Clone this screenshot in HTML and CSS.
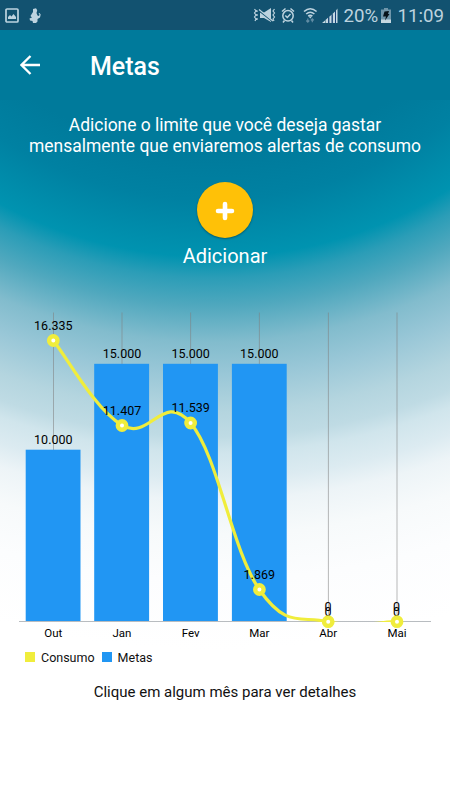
FILE: index.html
```html
<!DOCTYPE html>
<html lang="pt-BR">
<head>
  <meta charset="UTF-8">
  <meta name="viewport" content="width=device-width, initial-scale=1.0">
  <title>Metas</title>
  <link rel="stylesheet" href="styles.css">
</head>
<body>
  <div class="status-bar">
    <div class="status-left">
      <svg width="14" height="15" viewBox="0 0 14 15">
        <rect x="1" y="1" width="12" height="13" rx="1" fill="none" stroke="#bdd3df" stroke-width="1.7"/>
        <path d="M3 11V9l2-2 1.500 1.500L8.500 6 11 9v2z" fill="#bdd3df"/>
      </svg>
      <svg class="icon-figure" width="12" height="15" viewBox="0 0 12 15">
        <path d="M4 1l3-.7 1.200 2L7.500 5l1 2.500L10 8l.5-1.500L9.500 5.500l1-.5 1.200 1.500L11 9.500 8.500 11v2.500L7 15H4l-.5-2L1 12.500.5 10.500 3 9.500 1.500 8 3 5.500 4 4z" fill="#bdd3df"/>
      </svg>
    </div>
    <div class="status-right">
      <svg width="86" height="18" viewBox="253 6 86 18">
        <g fill="none" stroke="#bdd3df" stroke-width="1.200">
          <path d="M254.500 9l1.500 2-1.500 2 1.500 2-1.500 2 1.500 2-1 2M257 10v2M257 14v2M257 18v2M274.500 9l-1.500 2 1.500 2-1.500 2 1.500 2-1.500 2 1 2"/>
        </g>
        <path d="M260 12.500h4L271 8v14l-7-4h-4z" fill="#bdd3df"/>
        <path d="M257.500 9.500L272 21" stroke="#125270" stroke-width="1.500"/>
        <path d="M259 9.500L273 21" stroke="#bdd3df" stroke-width="1.200"/>
        <g fill="none" stroke="#bdd3df" stroke-width="1.500">
          <circle cx="288" cy="15.800" r="5.200"/>
          <path d="M285.300 15.500l2 2 3.200-3.500M282 11.500l3.500-3M294 11.500l-3.500-3M284.500 20.500l-1.500 2M291.500 20.500l1.500 2"/>
        </g>
        <g fill="none" stroke="#bdd3df" stroke-width="1.600">
          <path d="M304 11.500q6.300-5.500 12.600 0M306.200 14q4.100-3.500 8.200 0M308.200 16.200q2.100-1.700 4.200 0"/>
        </g>
        <path d="M308.500 16.500h3.500l-1.700 2z" fill="#bdd3df"/>
        <path d="M307.800 18.500v3.500M306.300 20.500l1.500 1.700 1.500-1.700M312.300 22.300v-3.500M310.800 20.300l1.500-1.500 1.500 1.500" fill="none" stroke="#638da5" stroke-width="1.200"/>
        <path d="M322 23l3-2.500V23zM325.500 20l2.700-2.500V23h-2.700zM329.300 16.700l2.400-2.200V23h-2.400zM332.700 13.700l2.300-2.200V23h-2.300zM336 10.500l1.500-2V23H336z" fill="#c4d8e2"/>
        <path d="M328.700 17.500V23M332.200 14.500V23M335.500 11.500V23" stroke="#173e78" stroke-width=".8"/>
      </svg>
      <span class="battery-level">20%</span>
      <svg class="icon-battery" width="10" height="15" viewBox="0 0 10 15">
        <path d="M3 0h4v1.500h3V15H0V1.500h3z" fill="#6f96aa"/>
        <path d="M0 11.500h10V15H0z" fill="#c7d9e2"/>
        <path d="M3.500 3.500L8 3 7 6h1.500L4 12.500 5 8.500H2z" fill="#061219"/>
      </svg>
      <span class="clock">11:09</span>
    </div>
  </div>

  <div class="toolbar">
    <svg width="20" height="20" viewBox="0 0 20 20">
      <path d="M20 10H2M10.500 1L1.500 10l9 9" fill="none" stroke="#fff" stroke-width="2.300"/>
    </svg>
    <h1 class="title">Metas</h1>
  </div>

  <div class="content">
    <p class="description">Adicione o limite que você deseja gastar<br>mensalmente que enviaremos alertas de consumo</p>

    <button class="add-button" aria-label="Adicionar meta">
      <svg width="20" height="20" viewBox="0 0 20 20">
        <path d="M10 3v14M3 10h14" stroke="#fff" stroke-width="4.600" stroke-linecap="round"/>
      </svg>
    </button>
    <div class="add-label">Adicionar</div>

    <svg class="chart" width="450" height="336" viewBox="0 306 450 336">
      <defs>
        <clipPath id="plot">
          <rect x="19" y="312" width="413" height="310"/>
        </clipPath>
      </defs>

      <g class="grid">
        <path d="M53.500 312.500V621M122 312.500V621M190.600 312.500V621M259.400 312.500V621M328.400 312.500V621M397 312.500V621"/>
      </g>

      <g class="bars">
        <rect x="25.700" y="449.700" width="54.800" height="171.800"/>
        <rect x="94.200" y="363.800" width="54.900" height="257.700"/>
        <rect x="163" y="363.800" width="54.900" height="257.700"/>
        <rect x="231.900" y="363.800" width="54.800" height="257.700"/>
      </g>
      <path class="axis" d="M19 621.500H431"/>

      <path class="line" clip-path="url(#plot)" d="M53.300 340.500C67 357.500 94.500 408.800 122 425.300C149.500 441.800 163.100 390.200 190.600 423C218.100 455.800 231.800 549.800 259.300 589.500C286.800 629.200 300.500 615.300 328 621.700C355.500 628.100 382.900 621.700 396.600 621.700"/>

      <g class="values">
        <text x="53.300" y="444">10.000</text>
        <text x="122" y="358">15.000</text>
        <text x="190.600" y="358">15.000</text>
        <text x="259.300" y="358">15.000</text>
        <text x="328" y="616">0</text>
        <text x="396.600" y="616">0</text>
        <text x="53.300" y="329.500">16.335</text>
        <text x="122" y="414.500">11.407</text>
        <text x="190.600" y="412">11.539</text>
        <text x="259.300" y="579">1.869</text>
        <text x="328" y="611">0</text>
        <text x="396.600" y="611">0</text>
      </g>

      <g class="points">
        <circle cx="53.300" cy="340.500" r="4.200"/>
        <circle cx="122" cy="425.500" r="4.200"/>
        <circle cx="190.600" cy="423" r="4.200"/>
        <circle cx="259.400" cy="589.500" r="4.200"/>
        <circle cx="328.200" cy="621.700" r="4.200"/>
        <circle cx="397" cy="621.700" r="4.200"/>
      </g>

      <g class="months">
        <text x="53.300" y="637">Out</text>
        <text x="122" y="637">Jan</text>
        <text x="190.600" y="637">Fev</text>
        <text x="259.300" y="637">Mar</text>
        <text x="328.200" y="637">Abr</text>
        <text x="397" y="637">Mai</text>
      </g>
    </svg>

    <div class="legend">
      <span class="swatch consumo"></span>
      <span class="legend-consumo">Consumo</span>
      <span class="swatch metas"></span>
      <span>Metas</span>
    </div>

    <p class="hint">Clique em algum mês para ver detalhes</p>
  </div>
</body>
</html>
```

FILE: styles.css
```css
:root {
  --primary: #007a9b;
  --status: #125270;
  --status-icon: #bdd3df;
  --yellow: #f0ed3c;
  --blue: #2196f3;
}

body {
  margin: 0;
  height: 800px;
  overflow: hidden;
  display: flex;
  flex-direction: column;
  font-family: Roboto, sans-serif;
  color: #111;
  background: radial-gradient(circle at 212px -190px,
    #007a9b 340px,
    #0081a2 390px,
    #0093b0 447px,
    #2b9db7 468px,
    #50a8be 496px,
    #82bccd 532px,
    #99c7d7 564px,
    #b4d5df 602px,
    #bfdbe4 627px,
    #d0e5ec 643px,
    #dcebf1 668px,
    #edf4f7 690px,
    #f7fafb 725px,
    #fcfdfe 770px,
    #ffffff 840px);
}

.status-bar {
  height: 30px;
  display: flex;
  justify-content: space-between;
  align-items: center;
  padding: 0 6px 0 5px;
  background: var(--status);
  color: var(--status-icon);
  font-size: 18.7px;
}

.status-left,
.status-right {
  display: flex;
  align-items: center;
}

.status-right span {
  margin-top: 2px;
}

.icon-figure {
  margin-left: 10px;
}

.battery-level {
  width: 34px;
  margin-left: 4px;
  white-space: nowrap;
}

.icon-battery {
  margin: 0 6px 0 4px;
}

.toolbar {
  height: 70px;
  display: flex;
  align-items: center;
  padding-left: 20px;
  background: var(--primary);
  color: #fff;
}

.title {
  margin: 2px 0 0 50px;
  font-size: 25px;
  font-weight: 500;
}

.content {
  display: flex;
  flex-direction: column;
  align-items: center;
}

.description {
  margin: 15px 0 26px;
  color: #fff;
  font-size: 17.45px;
  line-height: 20.5px;
  text-align: center;
}

.add-button {
  width: 56px;
  height: 56px;
  padding: 2px 0 0;
  display: flex;
  align-items: center;
  justify-content: center;
  border: 0;
  border-radius: 50%;
  background: #ffc107;
  box-shadow: 0 1px 2px rgba(0, 0, 0, 0.35);
}

.add-label {
  margin-top: 5px;
  height: 63px;
  color: #fff;
  font-size: 20px;
  line-height: 26px;
}

/* Chart */
.chart {
  display: block;
  font-family: Roboto, sans-serif;
}

.grid path {
  stroke: rgba(128, 128, 128, 0.55);
  stroke-width: 1;
}

.axis {
  stroke: #b8bcc0;
  stroke-width: 1;
}

.bars rect {
  fill: var(--blue);
}

.line {
  fill: none;
  stroke: var(--yellow);
  stroke-width: 3.2;
}

.points circle {
  fill: #fff;
  stroke: var(--yellow);
  stroke-width: 4.4;
}

.values text,
.months text {
  fill: #000;
  text-anchor: middle;
}

.values text {
  font-size: 12.5px;
}

.months text {
  font-size: 11.5px;
}

.legend {
  align-self: flex-start;
  display: flex;
  align-items: center;
  height: 16px;
  margin: 7px 0 0 25px;
  font-size: 12.5px;
}

.swatch {
  width: 10px;
  height: 10px;
  margin-right: 6px;
}

.consumo {
  background: var(--yellow);
}

.metas {
  background: var(--blue);
}

.legend-consumo {
  margin-right: 7px;
}

.hint {
  margin: 17px 0 0;
  font-size: 15px;
  line-height: 20px;
}
```
